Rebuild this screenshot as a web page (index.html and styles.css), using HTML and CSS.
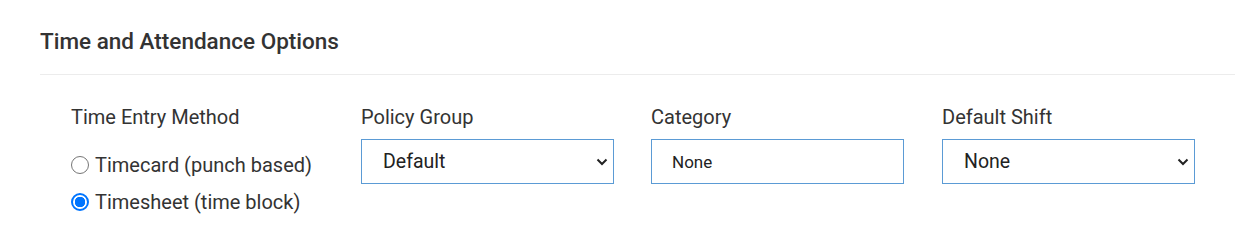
FILE: index.html
```html
<!DOCTYPE html>
<html>
<head>
<meta charset="utf-8">
<link rel="stylesheet" href="styles.css">
</head>
<body>
<section class="panel">
  <h2 class="title">Time and Attendance Options</h2>
  <div class="divider"></div>
  <div class="fields">
    <div class="field">
      <div class="label">Time Entry Method</div>
      <div class="radios">
        <label class="radio"><span class="dot"></span>Timecard (punch based)</label>
        <label class="radio"><span class="dot checked"></span>Timesheet (time block)</label>
      </div>
    </div>
    <div class="field">
      <div class="label">Policy Group</div>
      <div class="control select"><span>Default</span><svg class="chev" viewBox="0 0 12 8" width="12" height="8"><path d="M1.5 1.5 L6 6 L10.5 1.5" fill="none" stroke="#222" stroke-width="2"/></svg></div>
    </div>
    <div class="field">
      <div class="label">Category</div>
      <div class="control input"><span>None</span></div>
    </div>
    <div class="field">
      <div class="label">Default Shift</div>
      <div class="control select"><span>None</span><svg class="chev" viewBox="0 0 12 8" width="12" height="8"><path d="M1.5 1.5 L6 6 L10.5 1.5" fill="none" stroke="#222" stroke-width="2"/></svg></div>
    </div>
  </div>
</section>
</body>
</html>
```
FILE: styles.css
```css
html, body {
  margin: 0;
  padding: 0;
  background: #fff;
}
body {
  font-family: Roboto, "Liberation Sans", sans-serif;
  color: #333;
}
.panel {
  padding: 27px 0 0 40px;
}
.title {
  margin: 0;
  font-size: 22.5px;
  font-weight: 500;
  line-height: 28px;
  color: #333;
}
.divider {
  margin-top: 19px;
  height: 1px;
  background: #ececec;
}
.fields {
  display: flex;
  padding: 30px 0 0 31px;
}
.field {
  width: 253px;
  margin-right: 37px;
  flex: none;
}
.field:nth-child(4) {
  margin-left: 1px;
}
.label {
  font-size: 20px;
  line-height: 24px;
  color: #333;
}
.control {
  box-sizing: border-box;
  margin-top: 10px;
  height: 45px;
  border: 1px solid #5b9bd5;
  display: flex;
  align-items: center;
  justify-content: space-between;
  padding: 0 5px 0 21px;
  color: #222;
}
.select {
  font-size: 19.5px;
}
.input {
  font-size: 17px;
  padding-left: 20px;
}
.chev {
  display: block;
}
.radios {
  margin-top: 24px;
  display: flex;
  flex-direction: column;
  gap: 13px;
}
.radio {
  display: flex;
  align-items: center;
  font-size: 20px;
  line-height: 24px;
  color: #333;
}
.dot {
  box-sizing: border-box;
  width: 18px;
  height: 18px;
  border-radius: 50%;
  border: 1px solid #767676;
  margin-right: 6px;
  flex: none;
}
.dot.checked {
  border: 2px solid #0075ff;
  background: radial-gradient(circle, #0075ff 0 5px, #fff 5.5px);
}
```
